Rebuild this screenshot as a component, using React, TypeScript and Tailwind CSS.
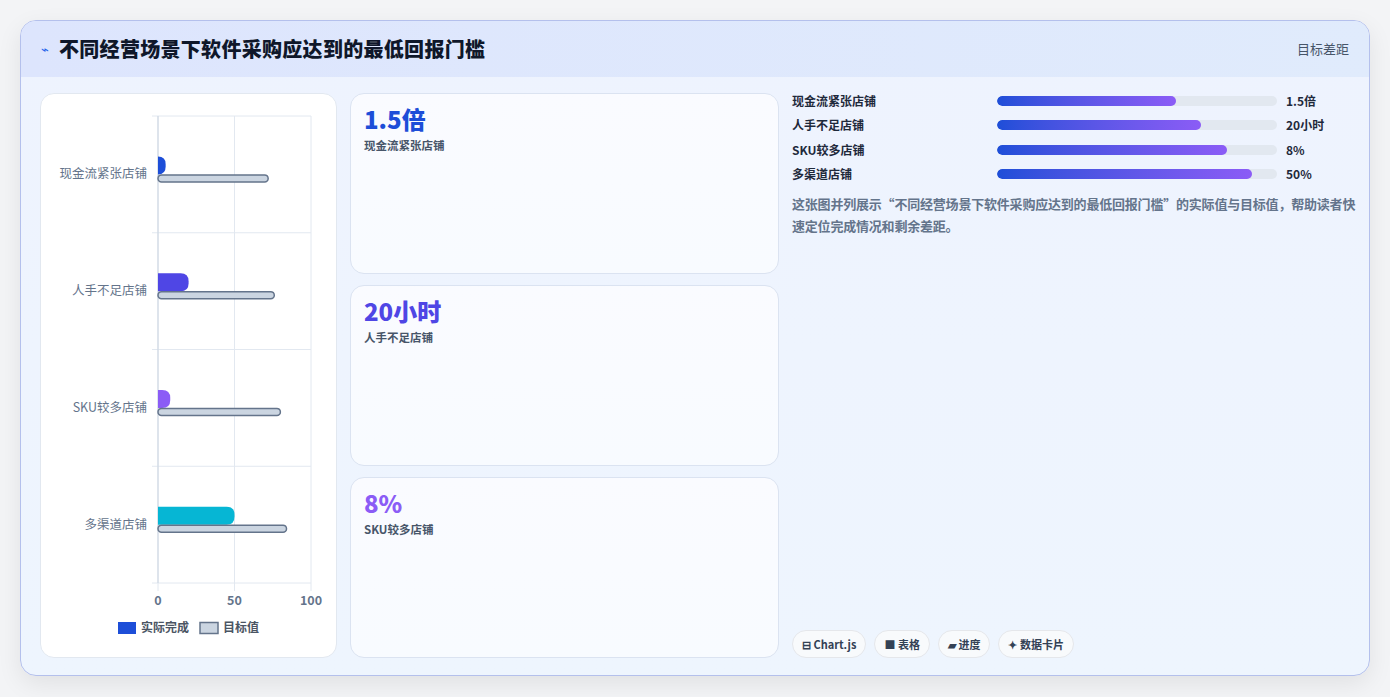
import React from "react";

const rows = [
  { name: "现金流紧张店铺", v: 5, t: 72, c: "#1d4ed8" },
  { name: "人手不足店铺", v: 20, t: 76, c: "#4f46e5" },
  { name: "SKU较多店铺", v: 8, t: 80, c: "#8b5cf6" },
  { name: "多渠道店铺", v: 50, t: 84, c: "#06b6d4" },
];
const kpis = [
  { v: "1.5倍", l: "现金流紧张店铺", c: "text-[#1d4ed8]" },
  { v: "20小时", l: "人手不足店铺", c: "text-[#4f46e5]" },
  { v: "8%", l: "SKU较多店铺", c: "text-[#8b5cf6]" },
];
const prog = [
  { n: "现金流紧张店铺", v: "1.5倍", p: 64 },
  { n: "人手不足店铺", v: "20小时", p: 73 },
  { n: "SKU较多店铺", v: "8%", p: 82 },
  { n: "多渠道店铺", v: "50%", p: 91 },
];

function Chart() {
  const x0 = 117, w = 153, top = 22, rowH = 116.75;
  return (
    <svg width="296" height="563" className="block">
      {[0, 50, 100].map((g, i) => (
        <line key={i} x1={x0 + (w * g) / 100} x2={x0 + (w * g) / 100} y1={top} y2={top + rowH * 4 + 8} stroke="#e2e8f0" />
      ))}
      {[0, 1, 2, 3, 4].map((i) => (
        <line key={i} x1={x0 - 6} x2={x0 + w} y1={top + rowH * i} y2={top + rowH * i} stroke="#e2e8f0" />
      ))}
      <line x1={x0} x2={x0} y1={top} y2={top + rowH * 4} stroke="#cbd5e1" />
      {rows.map((r, i) => {
        const cy = top + rowH * i + rowH / 2;
        const bw = (w * r.v) / 100;
        const rr = Math.min(8, bw);
        return (
          <g key={i}>
            <text x={x0 - 11} y={cy + 4} textAnchor="end" fontSize="12.5" fill="#64748b">{r.name}</text>
            <path d={`M${x0} ${cy - 18} h${bw - rr} q${rr} 0 ${rr} ${rr} v${18 - 2 * rr} q0 ${rr} -${rr} ${rr} h-${bw - rr} z`} fill={r.c} />
            <rect x={x0} y={cy + 0.5} width={(w * r.t) / 100} height={7} rx={3.5} fill="#cbd5e1" stroke="#64748b" strokeWidth={1.5} />
          </g>
        );
      })}
      {[0, 50, 100].map((g, i) => (
        <text key={i} x={x0 + (w * g) / 100} y={511} textAnchor="middle" fontSize="12.5" fontWeight="600" fill="#64748b">{g}</text>
      ))}
      <rect x={77} y={528} width={18} height={12} fill="#1d4ed8" />
      <text x={100} y={538} fontSize="12" fontWeight="600" fill="#4b5563">实际完成</text>
      <rect x={159} y={528.5} width={18} height={11} fill="#cbd5e1" stroke="#64748b" strokeWidth={1.5} />
      <text x={182} y={538} fontSize="12" fontWeight="600" fill="#4b5563">目标值</text>
    </svg>
  );
}

export default function App() {
  return (
    <div className="w-[1390px] h-[697px] bg-[#f3f4f6] pt-[20px] px-[20px]" style={{ fontFamily: '"Noto Sans CJK SC", "Noto Sans", sans-serif' }}>
      <div className="w-[1350px] h-[656px] rounded-[16px] border border-[#b4c0ec] overflow-hidden flex flex-col bg-gradient-to-b from-[#eef3fe] to-[#eef5fe] shadow-[0_8px_24px_rgba(0,0,0,0.08)]">
        <div className="h-[56px] shrink-0 bg-gradient-to-r from-[#dde5fd] to-[#e0ebfc] flex items-center justify-between px-[20px]">
          <div className="flex items-center gap-[10px]">
            <span className="text-[#2563eb] text-[13px]">⌁</span>
            <span className="text-[20px] font-black text-[#0f172a] tracking-[0.3px]">不同经营场景下软件采购应达到的最低回报门槛</span>
          </div>
          <span className="text-[13px] text-[#475569]">目标差距</span>
        </div>
        <div className="flex-1 flex gap-[13px] pt-[16px] pb-[18px] pl-[19px] pr-[14px]">
          <div className="w-[297px] shrink-0 rounded-[14px] bg-white border border-[#e2e8f0]">
            <Chart />
          </div>
          <div className="w-[429px] shrink-0 flex flex-col gap-[11px]">
            {kpis.map((k, i) => (
              <div key={i} className="flex-1 rounded-[14px] border border-[#dbe3f1] bg-gradient-to-b from-[#fafbff] to-[#f8fbff] px-[13px] pt-[7px]">
                <div className={`text-[24px] font-black leading-[36px] ${k.c}`}>{k.v}</div>
                <div className="text-[11.5px] font-semibold text-[#475569]">{k.l}</div>
              </div>
            ))}
          </div>
          <div className="flex-1 flex flex-col">
            <div className="flex flex-col gap-[7.5px] -mt-[1px]">
              {prog.map((p, i) => (
                <div key={i} className="flex items-center h-[17px]">
                  <span className="w-[205px] text-[12px] font-bold text-[#1e293b]">{p.n}</span>
                  <div className="w-[280px] h-[10px] rounded-full bg-[#e2e8f0] overflow-hidden">
                    <div className="h-full rounded-full bg-gradient-to-r from-[#1d4ed8] to-[#8b5cf6]" style={{ width: `${p.p}%` }} />
                  </div>
                  <span className="ml-[9px] text-[12px] font-bold text-[#1e293b]">{p.v}</span>
                </div>
              ))}
            </div>
            <p className="mt-[10px] text-[13px] leading-[22px] font-semibold text-[#64748b] w-[565px] tracking-[-0.2px]">
              这张图并列展示“不同经营场景下软件采购应达到的最低回报门槛”的实际值与目标值，帮助读者快速定位完成情况和剩余差距。
            </p>
            <div className="mt-auto flex gap-[8px]">
              {["⊟ Chart.js", "■ 表格", "▰ 进度", "✦ 数据卡片"].map((c, i) => (
                <span key={i} className="h-[28px] px-[9px] rounded-full bg-[#f8fafc] border border-[#e5e7eb] flex items-center text-[11px] font-bold text-[#334155]">{c}</span>
              ))}
            </div>
          </div>
        </div>
      </div>
    </div>
  );
}
